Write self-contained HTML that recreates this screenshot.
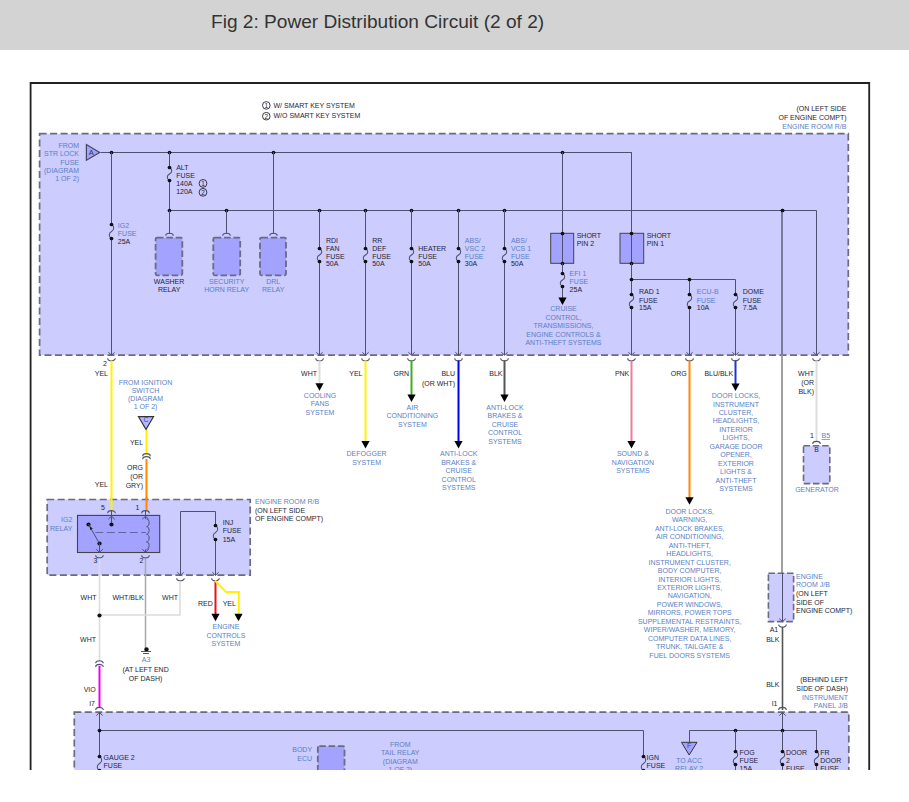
<!DOCTYPE html>
<html><head><meta charset="utf-8"><style>
html,body{margin:0;padding:0;background:#fff;width:909px;height:802px;overflow:hidden}
svg{display:block}
text{font-family:"Liberation Sans",sans-serif}
</style></head><body>
<svg width="909" height="802" viewBox="0 0 909 802">
<rect x="0" y="0" width="909" height="802" fill="#fff"/>
<rect x="0" y="0" width="909" height="50" fill="#d3d3d3"/>
<text x="211" y="27.7" fill="#333" font-size="19.1">Fig 2: Power Distribution Circuit (2 of 2)</text>
<g>
<circle cx="266.3" cy="105.4" r="3.8" fill="none" stroke="#252535" stroke-width="0.9"/>
<text x="266.3" y="107.80000000000001" text-anchor="middle" fill="#252535" font-size="6.5">1</text>
<text x="273.5" y="108.00" text-anchor="start" fill="#252535" font-size="7">W/ SMART KEY SYSTEM</text>
<circle cx="266.3" cy="116.2" r="3.8" fill="none" stroke="#252535" stroke-width="0.9"/>
<text x="266.3" y="118.60000000000001" text-anchor="middle" fill="#252535" font-size="6.5">2</text>
<text x="273.5" y="118.20" text-anchor="start" fill="#252535" font-size="7">W/O SMART KEY SYSTEM</text>
<text x="846.5" y="110.80" text-anchor="end" fill="#252535" font-size="7">(ON LEFT SIDE</text>
<text x="846.5" y="119.80" text-anchor="end" fill="#252535" font-size="7">OF ENGINE COMPT)</text>
<text x="846.5" y="129.10" text-anchor="end" fill="#5b7fc4" font-size="7">ENGINE ROOM R/B</text>
<rect x="39.6" y="133.7" width="808.6999999999999" height="221.5" rx="0" fill="#ccccff" stroke="#6a6a80" stroke-width="1.7" stroke-dasharray="7 3.5"/>
<text x="79" y="148.20" text-anchor="end" fill="#5b7fc4" font-size="7">FROM</text>
<text x="79" y="156.35" text-anchor="end" fill="#5b7fc4" font-size="7">STR LOCK</text>
<text x="79" y="164.50" text-anchor="end" fill="#5b7fc4" font-size="7">FUSE</text>
<text x="79" y="172.65" text-anchor="end" fill="#5b7fc4" font-size="7">(DIAGRAM</text>
<text x="79" y="180.80" text-anchor="end" fill="#5b7fc4" font-size="7">1 OF 2)</text>
<polygon points="86.4,144.6 86.4,160.2 99.6,152.5" fill="#a3a3ff" stroke="#444466" stroke-width="1.2"/>
<text x="91.3" y="155.2" text-anchor="middle" fill="#334" font-size="7.5">A</text>
<polyline points="100.5,152.5 631.5,152.5 631.5,233.5" stroke="#505070" stroke-width="1.0" fill="none" />
<circle cx="111.5" cy="152.5" r="1.85" fill="#111"/>
<circle cx="169.5" cy="152.5" r="1.85" fill="#111"/>
<circle cx="273.5" cy="152.5" r="1.85" fill="#111"/>
<circle cx="562.5" cy="152.5" r="1.85" fill="#111"/>
<line x1="169.5" y1="152.2" x2="169.5" y2="210.2" stroke="#505070" stroke-width="1.0" />
<rect x="168.0" y="168.5" width="3" height="11.0" fill="#ccccff"/>
<path d="M169.5,167.5 C172.5,169.1 172.5,172.4 169.5,174.0 S166.5,178.9 169.5,180.5" stroke="#505070" stroke-width="1.05" fill="none"/>
<circle cx="169.5" cy="167.5" r="1.85" fill="#111"/>
<circle cx="169.5" cy="180.5" r="1.85" fill="#111"/>
<text x="176.2" y="170.30" text-anchor="start" fill="#252535" font-size="7">ALT</text>
<text x="176.2" y="178.20" text-anchor="start" fill="#252535" font-size="7">FUSE</text>
<text x="176.2" y="186.10" text-anchor="start" fill="#252535" font-size="7">140A</text>
<text x="176.2" y="194.00" text-anchor="start" fill="#252535" font-size="7">120A</text>
<circle cx="203" cy="183.4" r="3.9" fill="none" stroke="#252535" stroke-width="0.9"/>
<text x="203" y="185.8" text-anchor="middle" fill="#252535" font-size="6.5">1</text>
<circle cx="203" cy="192.3" r="3.9" fill="none" stroke="#252535" stroke-width="0.9"/>
<text x="203" y="194.70000000000002" text-anchor="middle" fill="#252535" font-size="6.5">2</text>
<polyline points="169.5,210.5 816.5,210.5 816.5,355.5" stroke="#505070" stroke-width="1.0" fill="none" />
<circle cx="169.5" cy="210.5" r="1.85" fill="#111"/>
<circle cx="226.5" cy="210.5" r="1.85" fill="#111"/>
<circle cx="319.5" cy="210.5" r="1.85" fill="#111"/>
<circle cx="365.5" cy="210.5" r="1.85" fill="#111"/>
<circle cx="411.5" cy="210.5" r="1.85" fill="#111"/>
<circle cx="458.5" cy="210.5" r="1.85" fill="#111"/>
<circle cx="504.5" cy="210.5" r="1.85" fill="#111"/>
<circle cx="782.5" cy="210.5" r="1.85" fill="#111"/>
<line x1="169.5" y1="210.2" x2="169.5" y2="233.5" stroke="#505070" stroke-width="1.0" />
<path d="M165.7,235.8 A3.8,2.6 0 0 1 173.3,235.8" stroke="#505070" stroke-width="1.1" fill="none"/>
<rect x="155.6" y="237.7" width="26.700000000000017" height="37.60000000000002" rx="1.5" fill="#a3a3ff" stroke="#6a6a80" stroke-width="1.8" stroke-dasharray="6.5 2.8"/>
<text x="169.1" y="284.10" text-anchor="middle" fill="#252535" font-size="7">WASHER</text>
<text x="169.1" y="291.80" text-anchor="middle" fill="#252535" font-size="7">RELAY</text>
<line x1="226.5" y1="210.2" x2="226.5" y2="233.5" stroke="#505070" stroke-width="1.0" />
<path d="M222.7,235.8 A3.8,2.6 0 0 1 230.3,235.8" stroke="#505070" stroke-width="1.1" fill="none"/>
<rect x="213.3" y="237.7" width="26.899999999999977" height="37.60000000000002" rx="1.5" fill="#a3a3ff" stroke="#6a6a80" stroke-width="1.8" stroke-dasharray="6.5 2.8"/>
<text x="226.7" y="284.10" text-anchor="middle" fill="#5b7fc4" font-size="7">SECURITY</text>
<text x="226.7" y="291.80" text-anchor="middle" fill="#5b7fc4" font-size="7">HORN RELAY</text>
<line x1="273.5" y1="152.2" x2="273.5" y2="233.5" stroke="#505070" stroke-width="1.0" />
<path d="M269.7,235.8 A3.8,2.6 0 0 1 277.3,235.8" stroke="#505070" stroke-width="1.1" fill="none"/>
<rect x="260" y="237.7" width="26" height="37.60000000000002" rx="1.5" fill="#a3a3ff" stroke="#6a6a80" stroke-width="1.8" stroke-dasharray="6.5 2.8"/>
<text x="273.2" y="284.10" text-anchor="middle" fill="#5b7fc4" font-size="7">DRL</text>
<text x="273.2" y="291.80" text-anchor="middle" fill="#5b7fc4" font-size="7">RELAY</text>
<line x1="111.5" y1="152.2" x2="111.5" y2="355" stroke="#505070" stroke-width="1.0" />
<rect x="110.0" y="225.5" width="3" height="12.0" fill="#ccccff"/>
<path d="M111.5,224.5 C114.5,226.1 114.5,229.9 111.5,231.5 S108.5,236.9 111.5,238.5" stroke="#505070" stroke-width="1.05" fill="none"/>
<circle cx="111.5" cy="224.5" r="1.85" fill="#111"/>
<circle cx="111.5" cy="238.5" r="1.85" fill="#111"/>
<text x="117.8" y="228.00" text-anchor="start" fill="#5b7fc4" font-size="7">IG2</text>
<text x="117.8" y="236.20" text-anchor="start" fill="#5b7fc4" font-size="7">FUSE</text>
<text x="117.8" y="244.40" text-anchor="start" fill="#252535" font-size="7">25A</text>
<line x1="319.5" y1="210.2" x2="319.5" y2="355" stroke="#505070" stroke-width="1.0" />
<rect x="318.0" y="249.5" width="3" height="11.0" fill="#ccccff"/>
<path d="M319.5,248.5 C322.5,250.1 322.5,253.4 319.5,255.0 S316.5,259.9 319.5,261.5" stroke="#505070" stroke-width="1.05" fill="none"/>
<circle cx="319.5" cy="248.5" r="1.85" fill="#111"/>
<circle cx="319.5" cy="261.5" r="1.85" fill="#111"/>
<text x="325.90000000000003" y="243.10" text-anchor="start" fill="#252535" font-size="7">RDI</text>
<text x="325.90000000000003" y="251.00" text-anchor="start" fill="#252535" font-size="7">FAN</text>
<text x="325.90000000000003" y="259.10" text-anchor="start" fill="#252535" font-size="7">FUSE</text>
<text x="325.90000000000003" y="265.80" text-anchor="start" fill="#252535" font-size="7">50A</text>
<line x1="365.5" y1="210.2" x2="365.5" y2="355" stroke="#505070" stroke-width="1.0" />
<rect x="364.0" y="249.5" width="3" height="11.0" fill="#ccccff"/>
<path d="M365.5,248.5 C368.5,250.1 368.5,253.4 365.5,255.0 S362.5,259.9 365.5,261.5" stroke="#505070" stroke-width="1.05" fill="none"/>
<circle cx="365.5" cy="248.5" r="1.85" fill="#111"/>
<circle cx="365.5" cy="261.5" r="1.85" fill="#111"/>
<text x="372.20000000000005" y="243.10" text-anchor="start" fill="#252535" font-size="7">RR</text>
<text x="372.20000000000005" y="251.00" text-anchor="start" fill="#252535" font-size="7">DEF</text>
<text x="372.20000000000005" y="259.10" text-anchor="start" fill="#252535" font-size="7">FUSE</text>
<text x="372.20000000000005" y="265.80" text-anchor="start" fill="#252535" font-size="7">50A</text>
<line x1="458.5" y1="210.2" x2="458.5" y2="355" stroke="#505070" stroke-width="1.0" />
<rect x="457.0" y="249.5" width="3" height="11.0" fill="#ccccff"/>
<path d="M458.5,248.5 C461.5,250.1 461.5,253.4 458.5,255.0 S455.5,259.9 458.5,261.5" stroke="#505070" stroke-width="1.05" fill="none"/>
<circle cx="458.5" cy="248.5" r="1.85" fill="#111"/>
<circle cx="458.5" cy="261.5" r="1.85" fill="#111"/>
<text x="464.8" y="243.10" text-anchor="start" fill="#5b7fc4" font-size="7">ABS/</text>
<text x="464.8" y="251.00" text-anchor="start" fill="#5b7fc4" font-size="7">VSC 2</text>
<text x="464.8" y="259.10" text-anchor="start" fill="#5b7fc4" font-size="7">FUSE</text>
<text x="464.8" y="265.80" text-anchor="start" fill="#252535" font-size="7">30A</text>
<line x1="504.5" y1="210.2" x2="504.5" y2="355" stroke="#505070" stroke-width="1.0" />
<rect x="503.0" y="249.5" width="3" height="11.0" fill="#ccccff"/>
<path d="M504.5,248.5 C507.5,250.1 507.5,253.4 504.5,255.0 S501.5,259.9 504.5,261.5" stroke="#505070" stroke-width="1.05" fill="none"/>
<circle cx="504.5" cy="248.5" r="1.85" fill="#111"/>
<circle cx="504.5" cy="261.5" r="1.85" fill="#111"/>
<text x="510.90000000000003" y="243.10" text-anchor="start" fill="#5b7fc4" font-size="7">ABS/</text>
<text x="510.90000000000003" y="251.00" text-anchor="start" fill="#5b7fc4" font-size="7">VCS 1</text>
<text x="510.90000000000003" y="259.10" text-anchor="start" fill="#5b7fc4" font-size="7">FUSE</text>
<text x="510.90000000000003" y="265.80" text-anchor="start" fill="#252535" font-size="7">50A</text>
<line x1="411.5" y1="210.2" x2="411.5" y2="355" stroke="#505070" stroke-width="1.0" />
<rect x="410.0" y="249.5" width="3" height="11.0" fill="#ccccff"/>
<path d="M411.5,248.5 C414.5,250.1 414.5,253.4 411.5,255.0 S408.5,259.9 411.5,261.5" stroke="#505070" stroke-width="1.05" fill="none"/>
<circle cx="411.5" cy="248.5" r="1.85" fill="#111"/>
<circle cx="411.5" cy="261.5" r="1.85" fill="#111"/>
<text x="418.3" y="251.00" text-anchor="start" fill="#252535" font-size="7">HEATER</text>
<text x="418.3" y="259.10" text-anchor="start" fill="#252535" font-size="7">FUSE</text>
<text x="418.3" y="265.80" text-anchor="start" fill="#252535" font-size="7">50A</text>
<rect x="550.7" y="233.3" width="23.0" height="30" fill="#a3a3ff" stroke="#444" stroke-width="1"/>
<line x1="562.5" y1="152.2" x2="562.5" y2="263.3" stroke="#505070" stroke-width="1.0" />
<circle cx="562.5" cy="233.5" r="1.85" fill="#111"/>
<circle cx="562.5" cy="263.5" r="1.85" fill="#111"/>
<text x="576.7" y="238.20" text-anchor="start" fill="#252535" font-size="7">SHORT</text>
<text x="576.7" y="246.40" text-anchor="start" fill="#252535" font-size="7">PIN 2</text>
<rect x="620" y="233.3" width="23.700000000000045" height="30" fill="#a3a3ff" stroke="#444" stroke-width="1"/>
<line x1="631.5" y1="152.2" x2="631.5" y2="263.3" stroke="#505070" stroke-width="1.0" />
<circle cx="631.5" cy="233.5" r="1.85" fill="#111"/>
<circle cx="631.5" cy="263.5" r="1.85" fill="#111"/>
<text x="646.7" y="238.20" text-anchor="start" fill="#252535" font-size="7">SHORT</text>
<text x="646.7" y="246.40" text-anchor="start" fill="#252535" font-size="7">PIN 1</text>
<line x1="562.5" y1="263.3" x2="562.5" y2="300" stroke="#505070" stroke-width="1.0" />
<rect x="561.0" y="274.5" width="3" height="11.0" fill="#ccccff"/>
<path d="M562.5,273.5 C565.5,275.1 565.5,278.4 562.5,280.0 S559.5,284.9 562.5,286.5" stroke="#505070" stroke-width="1.05" fill="none"/>
<circle cx="562.5" cy="273.5" r="1.85" fill="#111"/>
<circle cx="562.5" cy="286.5" r="1.85" fill="#111"/>
<polygon points="558.4,297.5 566.6,297.5 562.5,305" fill="#000"/>
<text x="569.6" y="276.20" text-anchor="start" fill="#5b7fc4" font-size="7">EFI 1</text>
<text x="569.6" y="284.30" text-anchor="start" fill="#5b7fc4" font-size="7">FUSE</text>
<text x="569.6" y="292.40" text-anchor="start" fill="#252535" font-size="7">25A</text>
<text x="563.5" y="311.00" text-anchor="middle" fill="#5b7fc4" font-size="7">CRUISE</text>
<text x="563.5" y="319.50" text-anchor="middle" fill="#5b7fc4" font-size="7">CONTROL,</text>
<text x="563.5" y="328.00" text-anchor="middle" fill="#5b7fc4" font-size="7">TRANSMISSIONS,</text>
<text x="563.5" y="336.50" text-anchor="middle" fill="#5b7fc4" font-size="7">ENGINE CONTROLS &amp;</text>
<text x="563.5" y="345.00" text-anchor="middle" fill="#5b7fc4" font-size="7">ANTI-THEFT SYSTEMS</text>
<line x1="631.5" y1="263.3" x2="631.5" y2="355" stroke="#505070" stroke-width="1.0" />
<polyline points="631.5,279.5 735.5,279.5 735.5,355.5" stroke="#505070" stroke-width="1.0" fill="none" />
<line x1="689.5" y1="279.6" x2="689.5" y2="355" stroke="#505070" stroke-width="1.0" />
<circle cx="631.5" cy="279.5" r="1.85" fill="#111"/>
<circle cx="689.5" cy="279.5" r="1.85" fill="#111"/>
<rect x="630.0" y="295.5" width="3" height="11.0" fill="#ccccff"/>
<path d="M631.5,294.5 C634.5,296.1 634.5,299.4 631.5,301.0 S628.5,305.9 631.5,307.5" stroke="#505070" stroke-width="1.05" fill="none"/>
<circle cx="631.5" cy="294.5" r="1.85" fill="#111"/>
<circle cx="631.5" cy="307.5" r="1.85" fill="#111"/>
<rect x="688.0" y="295.5" width="3" height="11.0" fill="#ccccff"/>
<path d="M689.5,294.5 C692.5,296.1 692.5,299.4 689.5,301.0 S686.5,305.9 689.5,307.5" stroke="#505070" stroke-width="1.05" fill="none"/>
<circle cx="689.5" cy="294.5" r="1.85" fill="#111"/>
<circle cx="689.5" cy="307.5" r="1.85" fill="#111"/>
<rect x="734.0" y="295.5" width="3" height="11.0" fill="#ccccff"/>
<path d="M735.5,294.5 C738.5,296.1 738.5,299.4 735.5,301.0 S732.5,305.9 735.5,307.5" stroke="#505070" stroke-width="1.05" fill="none"/>
<circle cx="735.5" cy="294.5" r="1.85" fill="#111"/>
<circle cx="735.5" cy="307.5" r="1.85" fill="#111"/>
<text x="639" y="294.00" text-anchor="start" fill="#252535" font-size="7">RAD 1</text>
<text x="639" y="302.60" text-anchor="start" fill="#252535" font-size="7">FUSE</text>
<text x="639" y="309.80" text-anchor="start" fill="#252535" font-size="7">15A</text>
<text x="696.8" y="294.00" text-anchor="start" fill="#5b7fc4" font-size="7">ECU-B</text>
<text x="696.8" y="302.60" text-anchor="start" fill="#5b7fc4" font-size="7">FUSE</text>
<text x="696.8" y="309.80" text-anchor="start" fill="#252535" font-size="7">10A</text>
<text x="742.8" y="294.00" text-anchor="start" fill="#252535" font-size="7">DOME</text>
<text x="742.8" y="302.60" text-anchor="start" fill="#252535" font-size="7">FUSE</text>
<text x="742.8" y="309.80" text-anchor="start" fill="#252535" font-size="7">7.5A</text>
<line x1="782" y1="210.2" x2="782" y2="355.2" stroke="#7a7a9c" stroke-width="2" />
<line x1="782" y1="355.2" x2="782" y2="573.2" stroke="#a0a0a0" stroke-width="2" />
<line x1="782.5" y1="573.2" x2="782.5" y2="621.5" stroke="#505070" stroke-width="1.0" />
<circle cx="782.5" cy="210.5" r="1.85" fill="#111"/>
<polyline points="108.3,352.2 111.5,355.2 114.7,352.2" stroke="#505070" stroke-width="1" fill="none" />
<path d="M107.7,358.2 A3.8,2.6 0 0 0 115.3,358.2" stroke="#505070" stroke-width="1.1" fill="none"/>
<polyline points="316.3,352.2 319.5,355.2 322.7,352.2" stroke="#505070" stroke-width="1" fill="none" />
<path d="M315.7,358.2 A3.8,2.6 0 0 0 323.3,358.2" stroke="#505070" stroke-width="1.1" fill="none"/>
<polyline points="362.3,352.2 365.5,355.2 368.7,352.2" stroke="#505070" stroke-width="1" fill="none" />
<path d="M361.7,358.2 A3.8,2.6 0 0 0 369.3,358.2" stroke="#505070" stroke-width="1.1" fill="none"/>
<polyline points="408.3,352.2 411.5,355.2 414.7,352.2" stroke="#505070" stroke-width="1" fill="none" />
<path d="M407.7,358.2 A3.8,2.6 0 0 0 415.3,358.2" stroke="#505070" stroke-width="1.1" fill="none"/>
<polyline points="455.3,352.2 458.5,355.2 461.7,352.2" stroke="#505070" stroke-width="1" fill="none" />
<path d="M454.7,358.2 A3.8,2.6 0 0 0 462.3,358.2" stroke="#505070" stroke-width="1.1" fill="none"/>
<polyline points="501.3,352.2 504.5,355.2 507.7,352.2" stroke="#505070" stroke-width="1" fill="none" />
<path d="M500.7,358.2 A3.8,2.6 0 0 0 508.3,358.2" stroke="#505070" stroke-width="1.1" fill="none"/>
<polyline points="628.3,352.2 631.5,355.2 634.7,352.2" stroke="#505070" stroke-width="1" fill="none" />
<path d="M627.7,358.2 A3.8,2.6 0 0 0 635.3,358.2" stroke="#505070" stroke-width="1.1" fill="none"/>
<polyline points="686.3,352.2 689.5,355.2 692.7,352.2" stroke="#505070" stroke-width="1" fill="none" />
<path d="M685.7,358.2 A3.8,2.6 0 0 0 693.3,358.2" stroke="#505070" stroke-width="1.1" fill="none"/>
<polyline points="732.3,352.2 735.5,355.2 738.7,352.2" stroke="#505070" stroke-width="1" fill="none" />
<path d="M731.7,358.2 A3.8,2.6 0 0 0 739.3,358.2" stroke="#505070" stroke-width="1.1" fill="none"/>
<polyline points="813.3,352.2 816.5,355.2 819.7,352.2" stroke="#505070" stroke-width="1" fill="none" />
<path d="M812.7,358.2 A3.8,2.6 0 0 0 820.3,358.2" stroke="#505070" stroke-width="1.1" fill="none"/>
<line x1="111.5" y1="360.5" x2="111.5" y2="510.5" stroke="#fff200" stroke-width="2" />
<text x="107" y="366.00" text-anchor="end" fill="#252535" font-size="7">2</text>
<text x="108" y="375.50" text-anchor="end" fill="#252535" font-size="7">YEL</text>
<text x="108" y="486.70" text-anchor="end" fill="#252535" font-size="7">YEL</text>
<text x="145.5" y="385.20" text-anchor="middle" fill="#5b7fc4" font-size="7">FROM IGNITION</text>
<text x="145.5" y="393.15" text-anchor="middle" fill="#5b7fc4" font-size="7">SWITCH</text>
<text x="145.5" y="401.10" text-anchor="middle" fill="#5b7fc4" font-size="7">(DIAGRAM</text>
<text x="145.5" y="409.05" text-anchor="middle" fill="#5b7fc4" font-size="7">1 OF 2)</text>
<line x1="146.5" y1="429" x2="146.5" y2="455" stroke="#fff200" stroke-width="2" />
<polygon points="138.4,416.6 153.6,416.6 146,429.4" fill="#b8b8ff" stroke="#333" stroke-width="1.1"/>
<text x="146" y="422.2" text-anchor="middle" fill="#3340bb" font-size="6.8">C</text>
<text x="143.2" y="444.80" text-anchor="end" fill="#252535" font-size="7">YEL</text>
<path d="M142.7,456.2 A3.8,2.6 0 0 1 150.3,456.2" stroke="#505070" stroke-width="1.1" fill="none"/>
<path d="M142.7,459.2 A3.8,2.6 0 0 1 150.3,459.2" stroke="#505070" stroke-width="1.1" fill="none"/>
<line x1="146.5" y1="459" x2="146.5" y2="510.5" stroke="#ff8800" stroke-width="2" />
<text x="143" y="470.30" text-anchor="end" fill="#252535" font-size="7">ORG</text>
<text x="143" y="479.20" text-anchor="end" fill="#252535" font-size="7">(OR</text>
<text x="143" y="488.10" text-anchor="end" fill="#252535" font-size="7">GRY)</text>
<line x1="319.5" y1="360.5" x2="319.5" y2="384" stroke="#dcdcdc" stroke-width="2" />
<polygon points="315.4,383.2 323.6,383.2 319.5,390.7" fill="#000"/>
<text x="317" y="375.50" text-anchor="end" fill="#252535" font-size="7">WHT</text>
<text x="320" y="397.80" text-anchor="middle" fill="#5b7fc4" font-size="7">COOLING</text>
<text x="320" y="406.40" text-anchor="middle" fill="#5b7fc4" font-size="7">FANS</text>
<text x="320" y="415.00" text-anchor="middle" fill="#5b7fc4" font-size="7">SYSTEM</text>
<line x1="365.5" y1="360.5" x2="365.5" y2="442" stroke="#fff200" stroke-width="2" />
<polygon points="361.4,441.1 369.6,441.1 365.5,448.6" fill="#000"/>
<text x="362.5" y="375.50" text-anchor="end" fill="#252535" font-size="7">YEL</text>
<text x="366.6" y="456.00" text-anchor="middle" fill="#5b7fc4" font-size="7">DEFOGGER</text>
<text x="366.6" y="465.10" text-anchor="middle" fill="#5b7fc4" font-size="7">SYSTEM</text>
<line x1="411.5" y1="360.5" x2="411.5" y2="395" stroke="#44aa22" stroke-width="2" />
<polygon points="407.4,394.5 415.6,394.5 411.5,402" fill="#000"/>
<text x="409" y="375.50" text-anchor="end" fill="#252535" font-size="7">GRN</text>
<text x="412.4" y="409.90" text-anchor="middle" fill="#5b7fc4" font-size="7">AIR</text>
<text x="412.4" y="418.40" text-anchor="middle" fill="#5b7fc4" font-size="7">CONDITIONING</text>
<text x="412.4" y="426.90" text-anchor="middle" fill="#5b7fc4" font-size="7">SYSTEM</text>
<line x1="458.5" y1="360.5" x2="458.5" y2="442" stroke="#0000ee" stroke-width="2" />
<polygon points="454.4,441.1 462.6,441.1 458.5,448.6" fill="#000"/>
<text x="455" y="375.50" text-anchor="end" fill="#252535" font-size="7">BLU</text>
<text x="455" y="386.00" text-anchor="end" fill="#252535" font-size="7">(OR WHT)</text>
<text x="458.7" y="456.00" text-anchor="middle" fill="#5b7fc4" font-size="7">ANTI-LOCK</text>
<text x="458.7" y="464.50" text-anchor="middle" fill="#5b7fc4" font-size="7">BRAKES &amp;</text>
<text x="458.7" y="473.00" text-anchor="middle" fill="#5b7fc4" font-size="7">CRUISE</text>
<text x="458.7" y="481.50" text-anchor="middle" fill="#5b7fc4" font-size="7">CONTROL</text>
<text x="458.7" y="490.00" text-anchor="middle" fill="#5b7fc4" font-size="7">SYSTEMS</text>
<line x1="504.5" y1="360.5" x2="504.5" y2="395" stroke="#555555" stroke-width="2" />
<polygon points="500.4,394.5 508.6,394.5 504.5,402" fill="#000"/>
<text x="502.5" y="375.50" text-anchor="end" fill="#252535" font-size="7">BLK</text>
<text x="505" y="409.90" text-anchor="middle" fill="#5b7fc4" font-size="7">ANTI-LOCK</text>
<text x="505" y="418.40" text-anchor="middle" fill="#5b7fc4" font-size="7">BRAKES &amp;</text>
<text x="505" y="426.90" text-anchor="middle" fill="#5b7fc4" font-size="7">CRUISE</text>
<text x="505" y="435.40" text-anchor="middle" fill="#5b7fc4" font-size="7">CONTROL</text>
<text x="505" y="443.90" text-anchor="middle" fill="#5b7fc4" font-size="7">SYSTEMS</text>
<line x1="631.5" y1="360.5" x2="631.5" y2="442" stroke="#ee7c9c" stroke-width="2" />
<polygon points="627.4,441.1 635.6,441.1 631.5,448.6" fill="#000"/>
<text x="629.3" y="375.50" text-anchor="end" fill="#252535" font-size="7">PNK</text>
<text x="632.9" y="456.00" text-anchor="middle" fill="#5b7fc4" font-size="7">SOUND &amp;</text>
<text x="632.9" y="464.50" text-anchor="middle" fill="#5b7fc4" font-size="7">NAVIGATION</text>
<text x="632.9" y="473.00" text-anchor="middle" fill="#5b7fc4" font-size="7">SYSTEMS</text>
<line x1="689.5" y1="360.5" x2="689.5" y2="498" stroke="#ff8800" stroke-width="2" />
<polygon points="685.4,497.3 693.6,497.3 689.5,504.8" fill="#000"/>
<text x="686.7" y="375.70" text-anchor="end" fill="#252535" font-size="7">ORG</text>
<text x="689.7" y="513.90" text-anchor="middle" fill="#5b7fc4" font-size="7">DOOR LOCKS,</text>
<text x="689.7" y="522.35" text-anchor="middle" fill="#5b7fc4" font-size="7">WARNING,</text>
<text x="689.7" y="530.80" text-anchor="middle" fill="#5b7fc4" font-size="7">ANTI-LOCK BRAKES,</text>
<text x="689.7" y="539.25" text-anchor="middle" fill="#5b7fc4" font-size="7">AIR CONDITIONING,</text>
<text x="689.7" y="547.70" text-anchor="middle" fill="#5b7fc4" font-size="7">ANTI-THEFT,</text>
<text x="689.7" y="556.15" text-anchor="middle" fill="#5b7fc4" font-size="7">HEADLIGHTS,</text>
<text x="689.7" y="564.60" text-anchor="middle" fill="#5b7fc4" font-size="7">INSTRUMENT CLUSTER,</text>
<text x="689.7" y="573.05" text-anchor="middle" fill="#5b7fc4" font-size="7">BODY COMPUTER,</text>
<text x="689.7" y="581.50" text-anchor="middle" fill="#5b7fc4" font-size="7">INTERIOR LIGHTS,</text>
<text x="689.7" y="589.95" text-anchor="middle" fill="#5b7fc4" font-size="7">EXTERIOR LIGHTS,</text>
<text x="689.7" y="598.40" text-anchor="middle" fill="#5b7fc4" font-size="7">NAVIGATION,</text>
<text x="689.7" y="606.85" text-anchor="middle" fill="#5b7fc4" font-size="7">POWER WINDOWS,</text>
<text x="689.7" y="615.30" text-anchor="middle" fill="#5b7fc4" font-size="7">MIRRORS, POWER TOPS</text>
<text x="689.7" y="623.75" text-anchor="middle" fill="#5b7fc4" font-size="7">SUPPLEMENTAL RESTRAINTS,</text>
<text x="689.7" y="632.20" text-anchor="middle" fill="#5b7fc4" font-size="7">WIPER/WASHER, MEMORY,</text>
<text x="689.7" y="640.65" text-anchor="middle" fill="#5b7fc4" font-size="7">COMPUTER DATA LINES,</text>
<text x="689.7" y="649.10" text-anchor="middle" fill="#5b7fc4" font-size="7">TRUNK, TAILGATE &amp;</text>
<text x="689.7" y="657.55" text-anchor="middle" fill="#5b7fc4" font-size="7">FUEL DOORS SYSTEMS</text>
<line x1="735.5" y1="360.5" x2="735.5" y2="384" stroke="#2233cc" stroke-width="2" />
<polygon points="731.4,383.5 739.6,383.5 735.5,391" fill="#000"/>
<text x="733.2" y="375.70" text-anchor="end" fill="#252535" font-size="7">BLU/BLK</text>
<text x="736" y="398.10" text-anchor="middle" fill="#5b7fc4" font-size="7">DOOR LOCKS,</text>
<text x="736" y="406.56" text-anchor="middle" fill="#5b7fc4" font-size="7">INSTRUMENT</text>
<text x="736" y="415.02" text-anchor="middle" fill="#5b7fc4" font-size="7">CLUSTER,</text>
<text x="736" y="423.48" text-anchor="middle" fill="#5b7fc4" font-size="7">HEADLIGHTS,</text>
<text x="736" y="431.94" text-anchor="middle" fill="#5b7fc4" font-size="7">INTERIOR</text>
<text x="736" y="440.40" text-anchor="middle" fill="#5b7fc4" font-size="7">LIGHTS,</text>
<text x="736" y="448.86" text-anchor="middle" fill="#5b7fc4" font-size="7">GARAGE DOOR</text>
<text x="736" y="457.32" text-anchor="middle" fill="#5b7fc4" font-size="7">OPENER,</text>
<text x="736" y="465.78" text-anchor="middle" fill="#5b7fc4" font-size="7">EXTERIOR</text>
<text x="736" y="474.24" text-anchor="middle" fill="#5b7fc4" font-size="7">LIGHTS &amp;</text>
<text x="736" y="482.70" text-anchor="middle" fill="#5b7fc4" font-size="7">ANTI-THEFT</text>
<text x="736" y="491.16" text-anchor="middle" fill="#5b7fc4" font-size="7">SYSTEMS</text>
<line x1="816.5" y1="360.5" x2="816.5" y2="441" stroke="#dcdcdc" stroke-width="2" />
<text x="814" y="375.50" text-anchor="end" fill="#252535" font-size="7">WHT</text>
<text x="814" y="384.80" text-anchor="end" fill="#252535" font-size="7">(OR</text>
<text x="814" y="394.10" text-anchor="end" fill="#252535" font-size="7">BLK)</text>
<text x="814" y="438.30" text-anchor="end" fill="#252535" font-size="7">1</text>
<text x="821.5" y="438.3" fill="#5b7fc4" font-size="7" text-decoration="underline">B5</text>
<path d="M812.7,444 A3.8,2.6 0 0 1 820.3,444" stroke="#505070" stroke-width="1.1" fill="none"/>
<rect x="803.5" y="445.8" width="26.299999999999955" height="37.80000000000001" rx="0" fill="#ccccff" stroke="#6a6a80" stroke-width="1.6" stroke-dasharray="6.5 2.8"/>
<text x="816.5" y="451.80" text-anchor="middle" fill="#222255" font-size="6.8">B</text>
<text x="817" y="491.90" text-anchor="middle" fill="#5b7fc4" font-size="7">GENERATOR</text>
<rect x="47.2" y="499.5" width="203.0" height="75.70000000000005" rx="0" fill="#ccccff" stroke="#6a6a80" stroke-width="1.7" stroke-dasharray="7 3.5"/>
<text x="72.4" y="522.00" text-anchor="end" fill="#5b7fc4" font-size="7">IG2</text>
<text x="72.4" y="530.60" text-anchor="end" fill="#5b7fc4" font-size="7">RELAY</text>
<text x="255" y="503.70" text-anchor="start" fill="#5b7fc4" font-size="7">ENGINE ROOM R/B</text>
<text x="255" y="512.80" text-anchor="start" fill="#252535" font-size="7">(ON LEFT SIDE</text>
<text x="255" y="520.70" text-anchor="start" fill="#252535" font-size="7">OF ENGINE COMPT)</text>
<line x1="111.5" y1="497" x2="111.5" y2="510.5" stroke="#fff200" stroke-width="2" />
<line x1="146.5" y1="497" x2="146.5" y2="510.5" stroke="#ff8800" stroke-width="2" />
<rect x="77.5" y="515.4" width="82.2" height="37.1" fill="#a3a3ff" stroke="#444" stroke-width="1.1"/>
<path d="M107.7,513.2 A3.8,2.6 0 0 1 115.3,513.2" stroke="#505070" stroke-width="1.1" fill="none"/>
<line x1="111.5" y1="510.5" x2="111.5" y2="515.4" stroke="#505070" stroke-width="1.0" />
<path d="M141.7,513.2 A3.8,2.6 0 0 1 149.3,513.2" stroke="#505070" stroke-width="1.1" fill="none"/>
<line x1="145.5" y1="510.5" x2="145.5" y2="515.4" stroke="#505070" stroke-width="1.0" />
<text x="105" y="510.20" text-anchor="end" fill="#252535" font-size="7">5</text>
<text x="139.5" y="510.20" text-anchor="end" fill="#252535" font-size="7">1</text>
<polyline points="108.3,519.2 111.5,516.2 114.7,519.2" stroke="#505070" stroke-width="1" fill="none" />
<line x1="111.5" y1="516.2" x2="111.5" y2="524.2" stroke="#505070" stroke-width="1.0" />
<circle cx="111.5" cy="524.5" r="2.1" fill="#111"/>
<polyline points="142.3,519.2 145.5,516.2 148.7,519.2" stroke="#505070" stroke-width="1" fill="none" />
<line x1="145.5" y1="516.2" x2="145.5" y2="519" stroke="#505070" stroke-width="1.0" />
<path d="M146.5,519 c3.5,0 3.5,7.6 0,7.6 c3.5,0 3.5,7.6 0,7.6 c3.5,0 3.5,7.6 0,7.6 c3.5,0 3.5,7.6 0,7.6" stroke="#505070" stroke-width="1" fill="none"/>
<line x1="145.5" y1="549.4" x2="145.5" y2="552.3" stroke="#505070" stroke-width="1.0" />
<polyline points="142.3,549.3 145.5,552.3 148.7,549.3" stroke="#505070" stroke-width="1" fill="none" />
<line x1="95.3" y1="532.5" x2="145.9" y2="532.5" stroke="#6464a0" stroke-width="1" stroke-dasharray="8 3.5"/>
<circle cx="88.5" cy="524.5" r="2.1" fill="#111"/>
<circle cx="99.5" cy="543.5" r="2.1" fill="#111"/>
<line x1="88.5" y1="524.2" x2="99.5" y2="543.7" stroke="#505070" stroke-width="1.0" />
<polygon points="89.5,526 92.8,528.5 90.3,530.2" fill="#222"/>
<line x1="99.5" y1="543.7" x2="99.5" y2="552.3" stroke="#505070" stroke-width="1.0" />
<polyline points="96.3,549.3 99.5,552.3 102.7,549.3" stroke="#505070" stroke-width="1" fill="none" />
<path d="M95.7,555.3 A3.8,2.6 0 0 0 103.3,555.3" stroke="#505070" stroke-width="1.1" fill="none"/>
<path d="M141.7,555.3 A3.8,2.6 0 0 0 149.3,555.3" stroke="#505070" stroke-width="1.1" fill="none"/>
<text x="97.5" y="562.70" text-anchor="end" fill="#252535" font-size="7">3</text>
<text x="143.5" y="562.70" text-anchor="end" fill="#252535" font-size="7">2</text>
<polyline points="180.5,575.5 180.5,511.5 215.5,511.5 215.5,575.5" stroke="#505070" stroke-width="1.0" fill="none" />
<rect x="214.0" y="526.5" width="3" height="12.0" fill="#ccccff"/>
<path d="M215.5,525.5 C218.5,527.1 218.5,530.9 215.5,532.5 S212.5,537.9 215.5,539.5" stroke="#505070" stroke-width="1.05" fill="none"/>
<circle cx="215.5" cy="525.5" r="1.85" fill="#111"/>
<circle cx="215.5" cy="539.5" r="1.85" fill="#111"/>
<text x="222.7" y="524.90" text-anchor="start" fill="#252535" font-size="7">INJ</text>
<text x="222.7" y="533.35" text-anchor="start" fill="#252535" font-size="7">FUSE</text>
<text x="222.7" y="541.80" text-anchor="start" fill="#252535" font-size="7">15A</text>
<polyline points="177.3,572.2 180.5,575.2 183.7,572.2" stroke="#505070" stroke-width="1" fill="none" />
<path d="M176.7,578.2 A3.8,2.6 0 0 0 184.3,578.2" stroke="#505070" stroke-width="1.1" fill="none"/>
<polyline points="212.3,572.2 215.5,575.2 218.7,572.2" stroke="#505070" stroke-width="1" fill="none" />
<path d="M211.7,578.2 A3.8,2.6 0 0 0 219.3,578.2" stroke="#505070" stroke-width="1.1" fill="none"/>
<line x1="99.5" y1="558.5" x2="99.5" y2="662" stroke="#dcdcdc" stroke-width="1.6" />
<line x1="145.5" y1="558.5" x2="145.5" y2="649" stroke="#a8a8a8" stroke-width="1.5" />
<polyline points="180,581 180,615 99.5,615" stroke="#dcdcdc" stroke-width="1.6" fill="none" />
<circle cx="99.5" cy="615.5" r="2.1" fill="#111"/>
<line x1="215.5" y1="580.5" x2="215.5" y2="614" stroke="#ee1111" stroke-width="2" />
<polygon points="211.4,613.8 219.6,613.8 215.5,621.3" fill="#000"/>
<polyline points="215,580.5 226,592 238.8,592 238.8,614" stroke="#fff200" stroke-width="2" fill="none" />
<polygon points="234.4,613.8 242.6,613.8 238.5,621.3" fill="#000"/>
<text x="96.5" y="600.00" text-anchor="end" fill="#252535" font-size="7">WHT</text>
<text x="128" y="600.00" text-anchor="middle" fill="#252535" font-size="7">WHT/BLK</text>
<text x="178" y="600.00" text-anchor="end" fill="#252535" font-size="7">WHT</text>
<text x="212.7" y="605.80" text-anchor="end" fill="#252535" font-size="7">RED</text>
<text x="222.7" y="605.80" text-anchor="start" fill="#252535" font-size="7">YEL</text>
<text x="225.9" y="629.30" text-anchor="middle" fill="#5b7fc4" font-size="7">ENGINE</text>
<text x="225.9" y="637.60" text-anchor="middle" fill="#5b7fc4" font-size="7">CONTROLS</text>
<text x="225.9" y="645.90" text-anchor="middle" fill="#5b7fc4" font-size="7">SYSTEM</text>
<text x="96" y="642.20" text-anchor="end" fill="#252535" font-size="7">WHT</text>
<circle cx="146.5" cy="649.5" r="2.2" fill="#111"/>
<line x1="141" y1="651.5" x2="151" y2="651.5" stroke="#505070" stroke-width="1" />
<line x1="143" y1="653.5" x2="149" y2="653.5" stroke="#505070" stroke-width="1" />
<text x="146" y="662.30" text-anchor="middle" fill="#5b7fc4" font-size="7">A3</text>
<text x="145.6" y="672.30" text-anchor="middle" fill="#252535" font-size="7">(AT LEFT END</text>
<text x="145.6" y="680.90" text-anchor="middle" fill="#252535" font-size="7">OF DASH)</text>
<path d="M95.7,663.3 A3.8,2.6 0 0 1 103.3,663.3" stroke="#505070" stroke-width="1.1" fill="none"/>
<path d="M95.7,667 A3.8,2.6 0 0 1 103.3,667" stroke="#505070" stroke-width="1.1" fill="none"/>
<line x1="99.5" y1="665.8" x2="99.5" y2="707.6" stroke="#ee00ee" stroke-width="2" />
<text x="95.7" y="692.20" text-anchor="end" fill="#252535" font-size="7">VIO</text>
<text x="95" y="705.60" text-anchor="end" fill="#252535" font-size="7">I7</text>
<path d="M95.7,710 A3.8,2.6 0 0 1 103.3,710" stroke="#505070" stroke-width="1.1" fill="none"/>
<rect x="768.4" y="573.2" width="25.200000000000045" height="48.39999999999998" rx="0" fill="#ccccff" stroke="#6a6a80" stroke-width="1.6" stroke-dasharray="6.5 2.8"/>
<line x1="782.5" y1="573.2" x2="782.5" y2="621.6" stroke="#505070" stroke-width="1.0" />
<polyline points="779.3,618.6 782.5,621.6 785.7,618.6" stroke="#505070" stroke-width="1" fill="none" />
<path d="M778.7,624.5 A3.8,2.6 0 0 0 786.3,624.5" stroke="#505070" stroke-width="1.1" fill="none"/>
<text x="796" y="579.20" text-anchor="start" fill="#5b7fc4" font-size="7">ENGINE</text>
<text x="796" y="587.10" text-anchor="start" fill="#5b7fc4" font-size="7">ROOM J/B</text>
<text x="796" y="596.20" text-anchor="start" fill="#252535" font-size="7">(ON LEFT</text>
<text x="796" y="604.65" text-anchor="start" fill="#252535" font-size="7">SIDE OF</text>
<text x="796" y="613.10" text-anchor="start" fill="#252535" font-size="7">ENGINE COMPT)</text>
<line x1="782.5" y1="627" x2="782.5" y2="710" stroke="#555555" stroke-width="1.6" />
<text x="778.2" y="631.50" text-anchor="end" fill="#252535" font-size="7">A1</text>
<text x="779.4" y="641.60" text-anchor="end" fill="#252535" font-size="7">BLK</text>
<text x="779.4" y="686.70" text-anchor="end" fill="#252535" font-size="7">BLK</text>
<text x="777.5" y="705.70" text-anchor="end" fill="#252535" font-size="7">I1</text>
<text x="848" y="681.70" text-anchor="end" fill="#252535" font-size="7">(BEHIND LEFT</text>
<text x="848" y="690.60" text-anchor="end" fill="#252535" font-size="7">SIDE OF DASH)</text>
<text x="848" y="699.50" text-anchor="end" fill="#5b7fc4" font-size="7">INSTRUMENT</text>
<text x="848" y="707.80" text-anchor="end" fill="#5b7fc4" font-size="7">PANEL J/B</text>
<path d="M778.7,710 A3.8,2.6 0 0 1 786.3,710" stroke="#505070" stroke-width="1.1" fill="none"/>
<rect x="74.3" y="712.1" width="774.5" height="87.89999999999998" rx="0" fill="#ccccff" stroke="#6a6a80" stroke-width="1.7" stroke-dasharray="7 3.5"/>
<polyline points="96.3,715.6 99.5,712.6 102.7,715.6" stroke="#505070" stroke-width="1" fill="none" />
<line x1="99.5" y1="712.6" x2="99.5" y2="770" stroke="#505070" stroke-width="1.0" />
<polyline points="99.5,730.5 643.5,730.5 643.5,770.5" stroke="#505070" stroke-width="1.0" fill="none" />
<circle cx="99.5" cy="730.5" r="1.85" fill="#111"/>
<rect x="98.0" y="757.5" width="3" height="12.0" fill="#ccccff"/>
<path d="M99.5,756.5 C102.5,758.1 102.5,761.9 99.5,763.5 S96.5,768.9 99.5,770.5" stroke="#505070" stroke-width="1.05" fill="none"/>
<circle cx="99.5" cy="756.5" r="1.85" fill="#111"/>
<circle cx="99.5" cy="770.5" r="1.85" fill="#111"/>
<text x="103.6" y="760.00" text-anchor="start" fill="#252535" font-size="7">GAUGE 2</text>
<text x="103.6" y="767.80" text-anchor="start" fill="#252535" font-size="7">FUSE</text>
<rect x="317.8" y="746.2" width="26.69999999999999" height="43.799999999999955" rx="1.5" fill="#a3a3ff" stroke="#6a6a80" stroke-width="1.8" stroke-dasharray="6.5 2.8"/>
<text x="312.1" y="752.00" text-anchor="end" fill="#5b7fc4" font-size="7">BODY</text>
<text x="312.1" y="761.20" text-anchor="end" fill="#5b7fc4" font-size="7">ECU</text>
<text x="400.3" y="746.70" text-anchor="middle" fill="#5b7fc4" font-size="7">FROM</text>
<text x="400.3" y="755.10" text-anchor="middle" fill="#5b7fc4" font-size="7">TAIL RELAY</text>
<text x="400.3" y="763.50" text-anchor="middle" fill="#5b7fc4" font-size="7">(DIAGRAM</text>
<text x="400.3" y="771.90" text-anchor="middle" fill="#5b7fc4" font-size="7">1 OF 2)</text>
<rect x="642.0" y="757.5" width="3" height="12.0" fill="#ccccff"/>
<path d="M643.5,756.5 C646.5,758.1 646.5,761.9 643.5,763.5 S640.5,768.9 643.5,770.5" stroke="#505070" stroke-width="1.05" fill="none"/>
<circle cx="643.5" cy="756.5" r="1.85" fill="#111"/>
<circle cx="643.5" cy="770.5" r="1.85" fill="#111"/>
<text x="646.6" y="759.70" text-anchor="start" fill="#252535" font-size="7">IGN</text>
<text x="646.6" y="768.30" text-anchor="start" fill="#252535" font-size="7">FUSE</text>
<polyline points="689.5,742.5 689.5,730.5 816.5,730.5 816.5,770.5" stroke="#505070" stroke-width="1.0" fill="none" />
<polyline points="779.3,715.6 782.5,712.6 785.7,715.6" stroke="#505070" stroke-width="1" fill="none" />
<line x1="782.5" y1="712.6" x2="782.5" y2="770" stroke="#505070" stroke-width="1.0" />
<circle cx="735.5" cy="730.5" r="1.85" fill="#111"/>
<circle cx="782.5" cy="730.5" r="1.85" fill="#111"/>
<polygon points="681.5,742.3 697,742.3 689.2,755" fill="#a3a3ff" stroke="#333" stroke-width="1"/>
<text x="689.2" y="748.3" text-anchor="middle" fill="#3340bb" font-size="6.8">F</text>
<text x="689.2" y="763.10" text-anchor="middle" fill="#5b7fc4" font-size="7">TO ACC</text>
<text x="689.2" y="771.10" text-anchor="middle" fill="#5b7fc4" font-size="7">RELAY 2</text>
<line x1="735.5" y1="730.6" x2="735.5" y2="770" stroke="#505070" stroke-width="1.0" />
<rect x="734.0" y="752.5" width="3" height="11.0" fill="#ccccff"/>
<path d="M735.5,751.5 C738.5,753.1 738.5,756.4 735.5,758.0 S732.5,762.9 735.5,764.5" stroke="#505070" stroke-width="1.05" fill="none"/>
<circle cx="735.5" cy="751.5" r="1.85" fill="#111"/>
<circle cx="735.5" cy="764.5" r="1.85" fill="#111"/>
<line x1="782.5" y1="730.6" x2="782.5" y2="770" stroke="#505070" stroke-width="1.0" />
<rect x="781.0" y="752.5" width="3" height="11.0" fill="#ccccff"/>
<path d="M782.5,751.5 C785.5,753.1 785.5,756.4 782.5,758.0 S779.5,762.9 782.5,764.5" stroke="#505070" stroke-width="1.05" fill="none"/>
<circle cx="782.5" cy="751.5" r="1.85" fill="#111"/>
<circle cx="782.5" cy="764.5" r="1.85" fill="#111"/>
<line x1="816.5" y1="730.6" x2="816.5" y2="770" stroke="#505070" stroke-width="1.0" />
<rect x="815.0" y="752.5" width="3" height="11.0" fill="#ccccff"/>
<path d="M816.5,751.5 C819.5,753.1 819.5,756.4 816.5,758.0 S813.5,762.9 816.5,764.5" stroke="#505070" stroke-width="1.05" fill="none"/>
<circle cx="816.5" cy="751.5" r="1.85" fill="#111"/>
<circle cx="816.5" cy="764.5" r="1.85" fill="#111"/>
<text x="739.6" y="754.80" text-anchor="start" fill="#252535" font-size="7">FOG</text>
<text x="739.6" y="762.80" text-anchor="start" fill="#252535" font-size="7">FUSE</text>
<text x="739.6" y="770.80" text-anchor="start" fill="#252535" font-size="7">15A</text>
<text x="786" y="754.80" text-anchor="start" fill="#252535" font-size="7">DOOR</text>
<text x="786" y="762.80" text-anchor="start" fill="#252535" font-size="7">2</text>
<text x="786" y="770.80" text-anchor="start" fill="#252535" font-size="7">FUSE</text>
<text x="820.2" y="754.80" text-anchor="start" fill="#252535" font-size="7">FR</text>
<text x="820.2" y="762.80" text-anchor="start" fill="#252535" font-size="7">DOOR</text>
<text x="820.2" y="770.80" text-anchor="start" fill="#252535" font-size="7">FUSE</text>
</g>
<polyline points="30.6,770 30.6,83 869.2,83 869.2,770" fill="none" stroke="#222" stroke-width="1.8"/>
<rect x="0" y="770" width="909" height="32" fill="#fff"/>
</svg>
</body></html>
